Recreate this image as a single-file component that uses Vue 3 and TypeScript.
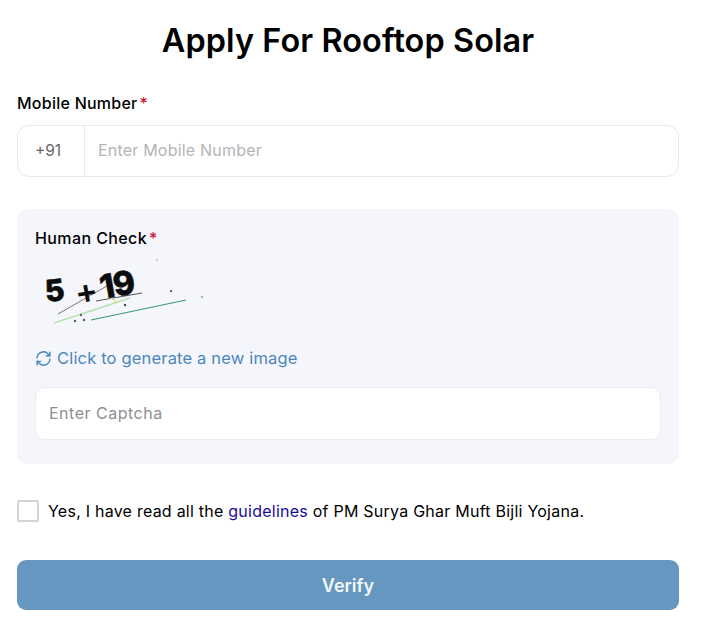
<script setup lang="ts">
const dots: [number, number, string][] = [
  [171, 291, '#a05a70'],
  [202, 297, '#a8aeb8'],
  [125, 305, '#445'],
  [84, 320, '#556'],
  [75, 321, '#556'],
  [81, 315, '#667'],
  [157, 260, '#ccc'],
]
</script>

<template>
  <main class="page">
    <h1 class="title">Apply For Rooftop Solar</h1>

    <label class="label">Mobile Number<span class="req">*</span></label>
    <div class="phone">
      <span class="prefix">+91</span>
      <input class="phone-input" type="text" placeholder="Enter Mobile Number" />
    </div>

    <section class="panel">
      <label class="label human">Human Check<span class="req">*</span></label>
      <svg class="captcha" width="190" height="82" viewBox="35 250 190 82" aria-label="captcha">
        <line x1="58" y1="314" x2="112" y2="283" stroke="#777" stroke-width="1" />
        <line x1="54" y1="323" x2="130" y2="298" stroke="#b5e2b0" stroke-width="1.4" />
        <line x1="96" y1="301" x2="142" y2="293" stroke="#555" stroke-width="1" />
        <line x1="91" y1="320" x2="186" y2="300" stroke="#3a9a78" stroke-width="1.1" />
        <line x1="108" y1="296" x2="118" y2="303" stroke="#d8e48a" stroke-width="1.4" />
        <circle v-for="(d, i) in dots" :key="i" :cx="d[0]" :cy="d[1]" r="1.2" :fill="d[2]" />
        <text x="46" y="302" class="cap-text" transform="rotate(-6 46 302)">5</text>
        <text x="77" y="305" class="cap-text plus" transform="rotate(-10 77 305)">+</text>
        <text x="102" y="299" class="cap-text tight" transform="rotate(-10 102 299)">19</text>
      </svg>
      <a class="refresh">
        <svg class="refresh-icon" width="17" height="17" viewBox="0 0 24 24" fill="none" stroke="#4a86bd" stroke-width="2" stroke-linecap="round" stroke-linejoin="round">
          <path d="M3 11a9 9 0 0 1 15.5-5.5L21 8" />
          <path d="M21 3v5h-5" />
          <path d="M21 13a9 9 0 0 1-15.5 5.5L3 16" />
          <path d="M3 21v-5h5" />
        </svg>
        Click to generate a new image
      </a>
      <input class="captcha-input" type="text" placeholder="Enter Captcha" />
    </section>

    <div class="agree">
      <span class="box"></span>
      <span class="agree-text">Yes, I have read all the <a class="guide">guidelines</a> of PM Surya Ghar Muft Bijli Yojana.</span>
    </div>

    <button class="verify" type="button">Verify</button>
  </main>
</template>

<style>
html, body { margin: 0; background: #fff; }
</style>

<style scoped>
.page {
  box-sizing: border-box;
  width: 679px;
  height: 637px;
  padding: 20px 0 0 17px;
  font-family: "Inter", "Liberation Sans", sans-serif;
  color: #000;
  overflow: hidden;
}
.title {
  margin: 0 0 32px;
  height: 42px;
  line-height: 42px;
  text-align: center;
  font-size: 32.4px;
  font-weight: 600;
  letter-spacing: 0.1px;
}
.label {
  display: block;
  height: 20px;
  line-height: 18px;
  font-size: 16px;
  font-weight: 500;
  letter-spacing: 0.25px;
}
.human { letter-spacing: 0.4px; }
.req { color: #d0103a; margin-left: 2px; }
.phone {
  display: flex;
  box-sizing: border-box;
  height: 52px;
  margin-top: 11px;
  border: 1px solid #e8e9ec;
  border-radius: 12px;
  background: #fff;
}
.prefix {
  box-sizing: border-box;
  width: 67px;
  padding-right: 6px;
  line-height: 50px;
  text-align: center;
  font-size: 15.5px;
  color: #666;
  border-right: 1px solid #e8e9ec;
}
.phone-input, .captcha-input {
  border: 0;
  outline: 0;
  font-family: inherit;
  font-size: 16px;
  background: transparent;
}
.phone-input { flex: 1; padding: 0 13px 2px; letter-spacing: 0.2px; }
.phone-input::placeholder { color: #b4b4b8; opacity: 1; }
.panel {
  box-sizing: border-box;
  height: 255px;
  margin-top: 32px;
  padding: 20px 18px 0;
  background: #f5f6fb;
  border-radius: 10px;
}
.captcha { display: block; margin-top: 1px; }
.refresh {
  display: flex;
  align-items: center;
  gap: 5px;
  height: 24px;
  margin-top: 14px;
  font-size: 16.5px;
  letter-spacing: 0.17px;
  color: #4a86bd;
}
.captcha-input {
  display: block;
  box-sizing: border-box;
  width: 626px;
  height: 53px;
  margin-top: 17px;
  padding: 0 13px 2px;
  letter-spacing: 0.5px;
  background: #fff;
  border: 1px solid #ebecef;
  border-radius: 10px;
}
.captcha-input::placeholder { color: #8e8e92; opacity: 1; }
.agree {
  display: flex;
  align-items: center;
  gap: 9px;
  margin-top: 36px;
  height: 22px;
  font-size: 16px;
  letter-spacing: 0.24px;
}
.box {
  box-sizing: border-box;
  width: 22px;
  height: 22px;
  border: 2px solid #d4d4d6;
  border-radius: 2px;
  background: #fff;
}
.guide { color: #1a0a9a; }
.verify {
  display: block;
  width: 662px;
  height: 50px;
  margin-top: 38px;
  border: 0;
  border-radius: 9px;
  background: #6597c0;
  color: #f3f6fa;
  font-family: inherit;
  font-size: 18px;
  font-weight: 600;
}
.cap-text {
  font-family: "Inter", sans-serif;
  font-weight: 800;
  font-size: 30px;
  fill: #0c0c0c;
  stroke: #0c0c0c;
  stroke-width: 0.6px;
}
.plus { font-size: 34px; font-weight: 600; stroke-width: 0; }
.tight { font-size: 33px; letter-spacing: -1px; }
</style>
